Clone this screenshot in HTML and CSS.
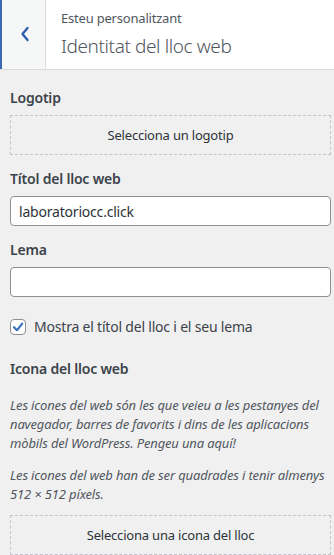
FILE: index.html
```html
<!DOCTYPE html>
<html>
<head>
	<title>Identitat del lloc web</title>
	<link rel="stylesheet" href="styles.css">
</head>
<body>
	<div class="panel">
		<div class="head">
			<button class="back" aria-label="Enrere">
				<svg width="12" height="16" viewBox="0 0 12 16"><polyline points="8.5,2 3.5,8 8.5,14" fill="none" stroke="#2f5fae" stroke-width="2.4" stroke-linecap="round" stroke-linejoin="round"/></svg>
			</button>
			<div class="titles">
				<span class="sub">Esteu personalitzant</span>
				<h3>Identitat del lloc web</h3>
			</div>
		</div>
		<ul class="controls">
			<li class="control">
				<span class="title">Logotip</span>
				<button class="upload">Selecciona un logotip</button>
			</li>
			<li class="control">
				<span class="title">Títol del lloc web</span>
				<input class="text" type="text" value="laboratoriocc.click">
			</li>
			<li class="control">
				<span class="title">Lema</span>
				<input class="text" type="text" value="">
			</li>
			<li class="control check">
				<span class="box">
					<svg width="14" height="14" viewBox="0 0 14 14"><polyline points="3,7.2 6,10.2 11.2,3.6" fill="none" stroke="#3b73c0" stroke-width="2.2" stroke-linecap="round" stroke-linejoin="round"/></svg>
				</span>
				<span>Mostra el títol del lloc i el seu lema</span>
			</li>
			<li class="control icon">
				<span class="title">Icona del lloc web</span>
				<p class="desc">Les icones del web són les que veieu a les pestanyes del navegador, barres de favorits i dins de les aplicacions mòbils del WordPress. Pengeu una aquí!</p>
				<p class="desc">Les icones del web han de ser quadrades i tenir almenys <strong>512 × 512</strong> píxels.</p>
				<button class="upload last">Selecciona una icona del lloc</button>
			</li>
		</ul>
	</div>
</body>
</html>
```

FILE: styles.css
```css
html, body {
	margin: 0px;
	padding: 0px;
}
body {
	background-color: #f0f0f1;
	font-family: "Noto Sans", "Open Sans", sans-serif;
	color: #3c434a;
	font-size: 13px;
}
* {
	box-sizing: border-box;
}
.head {
	display: flex;
	height: 70px;
	background: #fff;
	border-bottom: 1px solid #dcdcde;
}
.back {
	width: 46px;
	flex: none;
	display: flex;
	align-items: center;
	justify-content: center;
	padding: 0 0 2px 2px;
	background: #f6f7f7;
	border: none;
	border-left: 2px solid #3d67b3;
	border-right: 1px solid #dcdcde;
}
.titles {
	padding: 9px 0 0 15px;
	color: #50575e;
}
.sub {
	display: block;
	font-size: 13px;
	line-height: 18px;
	letter-spacing: -0.2px;
}
.titles h3 {
	margin: 6px 0 0;
	font-size: 19px;
	font-weight: 300;
	line-height: 26px;
	letter-spacing: -0.4px;
}
.controls {
	list-style: none;
	margin: 0;
	padding: 18px 3px 0 10px;
}
.control {
	margin-bottom: 14px;
}
.title {
	display: block;
	font-size: 14px;
	font-weight: 600;
	line-height: 20px;
	color: #3c434a;
	letter-spacing: -0.2px;
	margin-bottom: 7px;
}
.upload {
	display: block;
	width: 100%;
	height: 40px;
	background: none;
	border: 1px dashed #c3c4c7;
	font-family: inherit;
	font-size: 13px;
	color: #2c3338;
	letter-spacing: -0.2px;
}
.text {
	display: block;
	width: 100%;
	height: 30px;
	padding: 0 8px;
	border: 1px solid #8c8f94;
	border-radius: 4px;
	background: #fff;
	font-family: inherit;
	font-size: 14px;
	color: #2c3338;
	letter-spacing: -0.2px;
}
.check {
	display: flex;
	align-items: center;
	gap: 8px;
	padding-top: 6px;
	font-size: 14px;
	letter-spacing: -0.2px;
	margin-bottom: 23px;
}
.box {
	width: 16px;
	height: 16px;
	flex: none;
	display: flex;
	align-items: center;
	justify-content: center;
	background: #fff;
	border: 1px solid #8c8f94;
	border-radius: 4px;
}
.icon .title {
	margin-bottom: 17px;
}
.desc {
	margin: 0 0 13px;
	font-style: italic;
	font-size: 13px;
	line-height: 19px;
	color: #50575e;
	letter-spacing: -0.15px;
}
.desc strong {
	font-weight: normal;
}
.upload.last {
	margin-top: -2px;
}
```
